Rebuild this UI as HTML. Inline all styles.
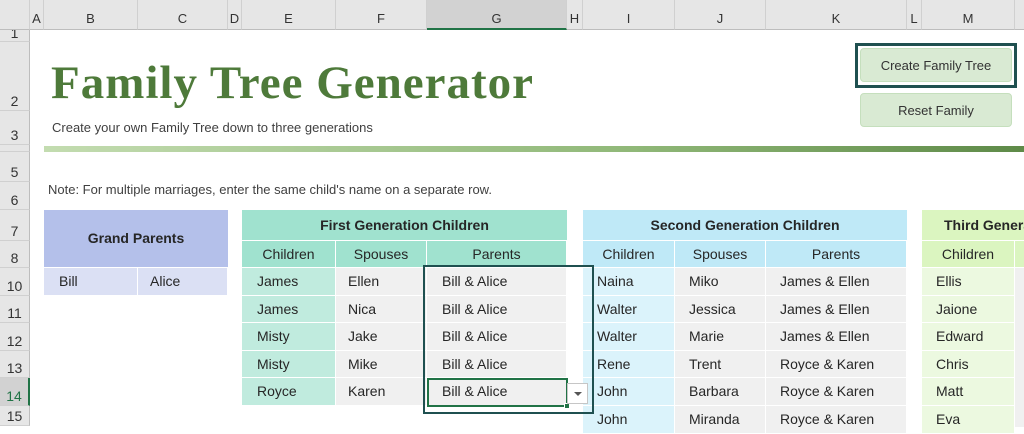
<!DOCTYPE html><html><head><style>
body{margin:0;width:1024px;height:421px;overflow:hidden;background:#fff;font-family:"Liberation Sans",sans-serif;position:relative}
div{position:absolute;box-sizing:border-box}
.ch{top:0;height:30px;background:#e6e6e6;border-right:1px solid #d0d0d0;border-bottom:1px solid #bdbdbd;font-size:13px;color:#333;text-align:center;line-height:38px;top:0}
.rh{left:0;width:30px;background:#e6e6e6;border-bottom:1px solid #d0d0d0;border-right:1px solid #bdbdbd;font-size:14px;color:#333;text-align:center;display:flex;align-items:flex-end;justify-content:center;padding-bottom:1px}
.c{font-size:14px;color:#262626;line-height:27px;padding-left:12px;border-bottom:1px solid #fff;border-right:1px solid #fff}
.h{font-size:14px;color:#262626;text-align:center;border-right:1px solid #fff;border-bottom:1px solid #fff}
.t{font-weight:bold;font-size:14px;color:#262626;text-align:center}
</style></head><body>
<div class="ch" style="left:0;width:30px"></div>
<div class="ch" style="left:30px;width:14px">A</div>
<div class="ch" style="left:44px;width:94px">B</div>
<div class="ch" style="left:138px;width:90px">C</div>
<div class="ch" style="left:228px;width:14px">D</div>
<div class="ch" style="left:242px;width:94px">E</div>
<div class="ch" style="left:336px;width:91px">F</div>
<div class="ch" style="left:427px;width:140px;background:#d2d2d2;border-bottom:2px solid #217346">G</div>
<div class="ch" style="left:567px;width:16px">H</div>
<div class="ch" style="left:583px;width:92px">I</div>
<div class="ch" style="left:675px;width:91px">J</div>
<div class="ch" style="left:766px;width:141px">K</div>
<div class="ch" style="left:907px;width:15px">L</div>
<div class="ch" style="left:922px;width:93px">M</div>
<div class="ch" style="left:1015px;width:20px"></div>
<div class="rh" style="top:30px;height:12px;line-height:10px;overflow:hidden;padding-bottom:0;align-items:center"><span style="margin-top:-6px">1</span></div>
<div class="rh" style="top:42px;height:69px">2</div>
<div class="rh" style="top:111px;height:34px">3</div>
<div class="rh" style="top:145px;height:7px"></div>
<div class="rh" style="top:152px;height:30px">5</div>
<div class="rh" style="top:182px;height:28px">6</div>
<div class="rh" style="top:210px;height:31px">7</div>
<div class="rh" style="top:241px;height:27px">8</div>
<div class="rh" style="top:268px;height:28px">10</div>
<div class="rh" style="top:296px;height:27px">11</div>
<div class="rh" style="top:323px;height:28px">12</div>
<div class="rh" style="top:351px;height:27px">13</div>
<div class="rh" style="top:378px;height:28px;background:#d2d2d2;color:#217346;border-right:2px solid #217346">14</div>
<div class="rh" style="top:406px;height:20px">15</div>

<div style="left:51px;top:56px;font-family:'Liberation Serif',serif;font-weight:bold;font-size:47px;color:#4e7a3a;letter-spacing:1px;white-space:nowrap">Family Tree Generator</div>
<div style="left:52px;top:120px;font-size:13px;color:#404040">Create your own Family Tree down to three generations</div>
<div style="left:44px;top:146px;width:980px;height:6px;background:linear-gradient(90deg,#c3dcb0,#90b878 60%,#5e8a48)"></div>
<div style="left:855px;top:43px;width:162px;height:45px;border:3px solid #1f5050"></div>
<div style="left:860px;top:48px;width:152px;height:34px;background:#d9ead3;border:1px solid #c5dfbd;border-radius:4px;font-size:13px;color:#333;text-align:center;line-height:33px">Create Family Tree</div>
<div style="left:860px;top:93px;width:152px;height:34px;background:#d9ead3;border:1px solid #c5dfbd;border-radius:4px;font-size:13px;color:#333;text-align:center;line-height:33px">Reset Family</div>
<div style="left:48px;top:182px;font-size:13px;color:#404040">Note: For multiple marriages, enter the same child's name on a separate row.</div>

<div class="t" style="left:44px;top:210px;width:184px;height:58px;background:#b4c0ea;line-height:56px;border-bottom:1px solid #fff">Grand Parents</div>
<div class="c" style="left:44px;top:268px;width:94px;height:28px;background:#dbe0f4;padding-left:15px">Bill</div>
<div class="c" style="left:138px;top:268px;width:90px;height:28px;background:#dbe0f4">Alice</div>

<div class="t" style="left:242px;top:210px;width:325px;height:31px;background:#a0e2cf;line-height:30px;border-bottom:1px solid #fff">First Generation Children</div>
<div class="h" style="left:242px;top:241px;width:94px;height:27px;background:#a0e2cf;line-height:27px">Children</div>
<div class="h" style="left:336px;top:241px;width:91px;height:27px;background:#a0e2cf;line-height:27px">Spouses</div>
<div class="h" style="left:427px;top:241px;width:140px;height:27px;background:#a0e2cf;line-height:27px">Parents</div>

<div class="t" style="left:583px;top:210px;width:324px;height:31px;background:#bfe9f7;line-height:30px;border-bottom:1px solid #fff">Second Generation Children</div>
<div class="h" style="left:583px;top:241px;width:92px;height:27px;background:#bfe9f7;line-height:27px">Children</div>
<div class="h" style="left:675px;top:241px;width:91px;height:27px;background:#bfe9f7;line-height:27px">Spouses</div>
<div class="h" style="left:766px;top:241px;width:141px;height:27px;background:#bfe9f7;line-height:27px">Parents</div>

<div class="t" style="left:922px;top:210px;width:110px;height:31px;background:#dbf5c0;line-height:30px;border-bottom:1px solid #fff;text-align:left;padding-left:22px;white-space:nowrap;overflow:hidden">Third Generation</div>
<div class="h" style="left:922px;top:241px;width:93px;height:27px;background:#dbf5c0;line-height:27px">Children</div>
<div class="h" style="left:1015px;top:241px;width:20px;height:27px;background:#dbf5c0"></div>

<div class="c" style="left:242px;top:268px;width:94px;height:28px;background:#c0ebde;padding-left:15px">James</div><div class="c" style="left:336px;top:268px;width:91px;height:28px;background:#f0f0f0">Ellen</div><div class="c" style="left:427px;top:268px;width:140px;height:28px;background:#f0f0f0;padding-left:15px">Bill &amp; Alice</div>
<div class="c" style="left:242px;top:296px;width:94px;height:27px;background:#c0ebde;padding-left:15px">James</div><div class="c" style="left:336px;top:296px;width:91px;height:27px;background:#f0f0f0">Nica</div><div class="c" style="left:427px;top:296px;width:140px;height:27px;background:#f0f0f0;padding-left:15px">Bill &amp; Alice</div>
<div class="c" style="left:242px;top:323px;width:94px;height:28px;background:#c0ebde;padding-left:15px">Misty</div><div class="c" style="left:336px;top:323px;width:91px;height:28px;background:#f0f0f0">Jake</div><div class="c" style="left:427px;top:323px;width:140px;height:28px;background:#f0f0f0;padding-left:15px">Bill &amp; Alice</div>
<div class="c" style="left:242px;top:351px;width:94px;height:27px;background:#c0ebde;padding-left:15px">Misty</div><div class="c" style="left:336px;top:351px;width:91px;height:27px;background:#f0f0f0">Mike</div><div class="c" style="left:427px;top:351px;width:140px;height:27px;background:#f0f0f0;padding-left:15px">Bill &amp; Alice</div>
<div class="c" style="left:242px;top:378px;width:94px;height:28px;background:#c0ebde;padding-left:15px">Royce</div><div class="c" style="left:336px;top:378px;width:91px;height:28px;background:#f0f0f0">Karen</div><div class="c" style="left:427px;top:378px;width:140px;height:28px;background:#f0f0f0;padding-left:15px">Bill &amp; Alice</div>

<div class="c" style="left:583px;top:268px;width:92px;height:28px;background:#dbf3fb;padding-left:14px">Naina</div><div class="c" style="left:675px;top:268px;width:91px;height:28px;background:#f0f0f0;padding-left:14px">Miko</div><div class="c" style="left:766px;top:268px;width:141px;height:28px;background:#f0f0f0;padding-left:14px">James &amp; Ellen</div>
<div class="c" style="left:583px;top:296px;width:92px;height:27px;background:#dbf3fb;padding-left:14px">Walter</div><div class="c" style="left:675px;top:296px;width:91px;height:27px;background:#f0f0f0;padding-left:14px">Jessica</div><div class="c" style="left:766px;top:296px;width:141px;height:27px;background:#f0f0f0;padding-left:14px">James &amp; Ellen</div>
<div class="c" style="left:583px;top:323px;width:92px;height:28px;background:#dbf3fb;padding-left:14px">Walter</div><div class="c" style="left:675px;top:323px;width:91px;height:28px;background:#f0f0f0;padding-left:14px">Marie</div><div class="c" style="left:766px;top:323px;width:141px;height:28px;background:#f0f0f0;padding-left:14px">James &amp; Ellen</div>
<div class="c" style="left:583px;top:351px;width:92px;height:27px;background:#dbf3fb;padding-left:14px">Rene</div><div class="c" style="left:675px;top:351px;width:91px;height:27px;background:#f0f0f0;padding-left:14px">Trent</div><div class="c" style="left:766px;top:351px;width:141px;height:27px;background:#f0f0f0;padding-left:14px">Royce &amp; Karen</div>
<div class="c" style="left:583px;top:378px;width:92px;height:28px;background:#dbf3fb;padding-left:14px">John</div><div class="c" style="left:675px;top:378px;width:91px;height:28px;background:#f0f0f0;padding-left:14px">Barbara</div><div class="c" style="left:766px;top:378px;width:141px;height:28px;background:#f0f0f0;padding-left:14px">Royce &amp; Karen</div>
<div class="c" style="left:583px;top:406px;width:92px;height:28px;background:#dbf3fb;padding-left:14px">John</div><div class="c" style="left:675px;top:406px;width:91px;height:28px;background:#f0f0f0;padding-left:14px">Miranda</div><div class="c" style="left:766px;top:406px;width:141px;height:28px;background:#f0f0f0;padding-left:14px">Royce &amp; Karen</div>

<div class="c" style="left:922px;top:268px;width:93px;height:28px;background:#ecf9e0;padding-left:14px">Ellis</div>
<div class="c" style="left:922px;top:296px;width:93px;height:27px;background:#ecf9e0;padding-left:14px">Jaione</div>
<div class="c" style="left:922px;top:323px;width:93px;height:28px;background:#ecf9e0;padding-left:14px">Edward</div>
<div class="c" style="left:922px;top:351px;width:93px;height:27px;background:#ecf9e0;padding-left:14px">Chris</div>
<div class="c" style="left:922px;top:378px;width:93px;height:28px;background:#ecf9e0;padding-left:14px">Matt</div>
<div class="c" style="left:922px;top:406px;width:93px;height:28px;background:#ecf9e0;padding-left:14px">Eva</div>
<div class="c" style="left:1015px;top:268px;width:20px;height:160px;background:#f0f0f0"></div>

<div style="left:427px;top:378px;width:141px;height:29px;border:2px solid #217346"></div>
<div style="left:564px;top:403px;width:6px;height:6px;background:#217346;border:1px solid #fff"></div>
<div style="left:567px;top:383px;width:21px;height:21px;background:#fff;border:1px solid #c6c6c6"></div>
<div style="left:574px;top:392px;width:0;height:0;border-left:4px solid transparent;border-right:4px solid transparent;border-top:4px solid #555"></div>
<div style="left:423px;top:265px;width:171px;height:149px;border:2px solid #1f5050"></div>
</body></html>
